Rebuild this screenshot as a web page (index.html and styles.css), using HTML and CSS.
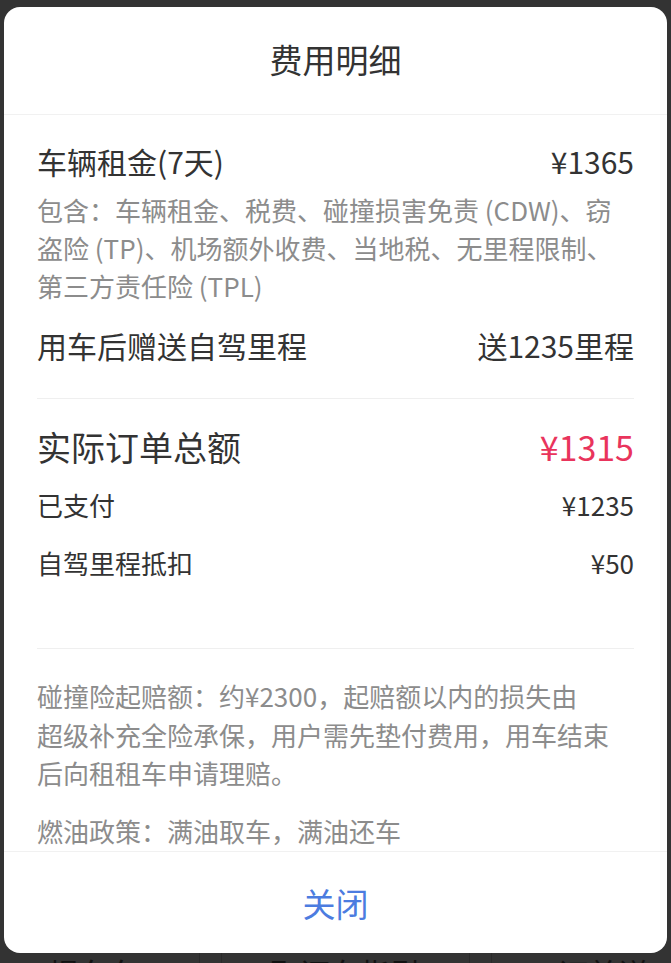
FILE: index.html
```html
<!DOCTYPE html>
<html lang="zh-CN">
<head>
<meta charset="utf-8">
<title>费用明细</title>
<link rel="stylesheet" href="styles.css">
</head>
<body>
<div class="page">
  <div class="modal">
    <div class="modal-header">费用明细</div>
    <div class="modal-body">
      <div class="section">
        <div class="row row-main">
          <span>车辆租金(7天)</span>
          <span>¥1365</span>
        </div>
        <p class="desc">包含：车辆租金、税费、碰撞损害免责 (CDW)、窃盗险 (TP)、机场额外收费、当地税、无里程限制、第三方责任险 (TPL)</p>
        <div class="row row-main row-gift">
          <span>用车后赠送自驾里程</span>
          <span>送1235里程</span>
        </div>
      </div>
      <div class="divider"></div>
      <div class="section section-total">
        <div class="row row-total">
          <span>实际订单总额</span>
          <span class="price-red">¥1315</span>
        </div>
        <div class="row row-sub">
          <span>已支付</span>
          <span>¥1235</span>
        </div>
        <div class="row row-sub">
          <span>自驾里程抵扣</span>
          <span>¥50</span>
        </div>
      </div>
      <div class="divider divider-notes"></div>
      <div class="notes">
        <p class="note">碰撞险起赔额：约¥2300，起赔额以内的损失由<br>超级补充全险承保，用户需先垫付费用，用车结束后向租租车申请理赔。</p>
        <p class="note">燃油政策：满油取车，满油还车</p>
      </div>
    </div>
    <div class="modal-footer">
      <span class="close-btn">关闭</span>
    </div>
  </div>
  <div class="under-bar">
    <div class="under-cell under-left">提车车</div>
    <div class="under-cell under-mid">取还车指引</div>
    <div class="under-cell under-right">订单详情</div>
  </div>
</div>
</body>
</html>
```
FILE: styles.css
```css
html, body {
  margin: 0;
  padding: 0;
  height: 963px;
  overflow: hidden;
  background: #333333;
  font-family: "Noto Sans CJK SC", "Noto Sans", sans-serif;
}

.page {
  display: flex;
  flex-direction: column;
  padding-top: 7px;
}

.modal {
  margin: 0 4px;
  height: 946px;
  background: #ffffff;
  border-radius: 16px;
  display: flex;
  flex-direction: column;
  overflow: hidden;
}

.modal-header {
  flex: none;
  height: 108px;
  box-sizing: border-box;
  padding-bottom: 3px;
  display: flex;
  align-items: center;
  justify-content: center;
  font-size: 33px;
  color: #333333;
  border-bottom: 1px solid #f1f1f1;
}

.modal-body {
  flex: 1;
  overflow: hidden;
  padding: 0 33px;
  color: #333333;
}

.section {
  padding-top: 24px;
}

.row {
  display: flex;
  justify-content: space-between;
  align-items: center;
}

.row-main {
  height: 44px;
  font-size: 30px;
}

.row-gift {
  margin-top: 18px;
}

.desc {
  margin: 8px 0 0;
  font-size: 26px;
  line-height: 38px;
  color: #8c8c8c;
}

.divider {
  height: 1px;
  background: #efefef;
  margin-top: 31px;
}

.section-total {
  padding-top: 19px;
}

.row-total {
  height: 57px;
  font-size: 34px;
}

.price-red {
  color: #e9345c;
}

.row-sub {
  height: 58px;
  font-size: 26px;
}

.divider-notes {
  margin-top: 57px;
}

.notes {
  padding-top: 28px;
}

.note {
  margin: 0 0 19.5px;
  font-size: 26px;
  line-height: 38.5px;
  color: #8c8c8c;
}

.modal-footer {
  flex: none;
  height: 102px;
  box-sizing: border-box;
  border-top: 1px solid #f1f1f1;
  display: flex;
  align-items: center;
  justify-content: center;
}

.close-btn {
  font-size: 33px;
  color: #4c7ce0;
}

.under-bar {
  display: flex;
  height: 60px;
  color: #121212;
  font-size: 30px;
  line-height: 1;
}

.under-cell {
  display: flex;
  align-items: flex-start;
  padding-top: 4px;
}

.under-left {
  width: 200px;
  padding-left: 49px;
  box-sizing: border-box;
  border-right: 1px solid #2a2a2a;
}

.under-mid {
  width: 249px;
  justify-content: center;
  box-sizing: border-box;
  border-left: 1px solid #2a2a2a;
  border-right: 1px solid #2a2a2a;
  margin-left: 21px;
}

.under-right {
  flex: 1;
  padding-left: 66px;
  border-left: 1px solid #2a2a2a;
  margin-left: 21px;
}
```
